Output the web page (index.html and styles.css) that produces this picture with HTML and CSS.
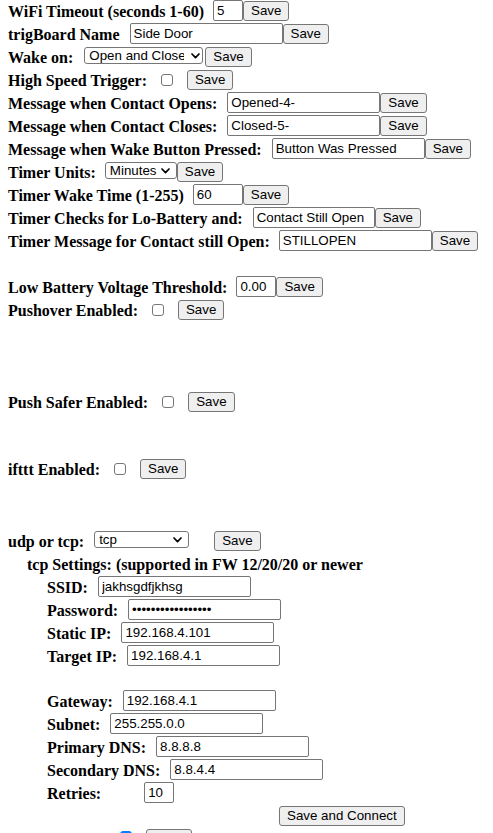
FILE: index.html
```html
<!DOCTYPE html>
<html lang="en">
<head>
<meta charset="utf-8">
<title>trigBoard Configurator</title>
<link rel="stylesheet" href="styles.css">
</head>
<body>
<div class="page">
  <div class="row"><span class="lbl">WiFi Timeout (seconds 1-60)</span><input class="field w-30 tight" type="text" value="5"><button class="btn">Save</button></div>
  <div class="row"><span class="lbl">trigBoard Name</span><input class="field" type="text" value="Side Door"><button class="btn">Save</button></div>
  <div class="row"><span class="lbl">Wake on:</span><span class="sel-wrap sel-tight"><select class="sel w-118"><option>Open and Close</option><option>Open</option><option>Close</option></select><svg class="chev" width="9" height="6" viewBox="0 0 9 6"><path d="M1 1 L4.5 4.6 L8 1" fill="none" stroke="#000" stroke-width="1.7" stroke-linecap="round" stroke-linejoin="round"/></svg></span><button class="btn btn-gap2">Save</button></div>
  <div class="row"><span class="lbl">High Speed Trigger:</span><input class="chk" type="checkbox"><button class="btn btn-after-chk">Save</button></div>
  <div class="row"><span class="lbl">Message when Contact Opens:</span><input class="field" type="text" value="Opened-4-"><button class="btn">Save</button></div>
  <div class="row"><span class="lbl">Message when Contact Closes:</span><input class="field" type="text" value="Closed-5-"><button class="btn">Save</button></div>
  <div class="row"><span class="lbl">Message when Wake Button Pressed:</span><input class="field" type="text" value="Button Was Pressed"><button class="btn">Save</button></div>
  <div class="row"><span class="lbl">Timer Units:</span><span class="sel-wrap sel-units"><select class="sel w-72"><option>Minutes</option><option>Seconds</option></select><svg class="chev" width="9" height="6" viewBox="0 0 9 6"><path d="M1 1 L4.5 4.6 L8 1" fill="none" stroke="#000" stroke-width="1.7" stroke-linecap="round" stroke-linejoin="round"/></svg></span><button class="btn">Save</button></div>
  <div class="row"><span class="lbl">Timer Wake Time (1-255)</span><input class="field w-50 tight" type="text" value="60"><button class="btn">Save</button></div>
  <div class="row"><span class="lbl">Timer Checks for Lo-Battery and:</span><input class="field w-122" type="text" value="Contact Still Open"><button class="btn">Save</button></div>
  <div class="row"><span class="lbl">Timer Message for Contact still Open:</span><input class="field tight" type="text" value="STILLOPEN"><button class="btn">Save</button></div>
  <div class="spacer s-23"></div>
  <div class="row"><span class="lbl">Low Battery Voltage Threshold:</span><input class="field w-40 tight" type="text" value="0.00"><button class="btn">Save</button></div>
  <div class="row"><span class="lbl">Pushover Enabled:</span><input class="chk" type="checkbox"><button class="btn btn-after-chk">Save</button></div>
  <div class="spacer s-69"></div>
  <div class="row"><span class="lbl">Push Safer Enabled:</span><input class="chk" type="checkbox"><button class="btn btn-after-chk">Save</button></div>
  <div class="spacer s-44"></div>
  <div class="row"><span class="lbl">ifttt Enabled:</span><input class="chk" type="checkbox"><button class="btn btn-after-chk">Save</button></div>
  <div class="spacer s-49"></div>
  <div class="row"><span class="lbl">udp or tcp:</span><span class="sel-wrap sel-udp"><select class="sel w-95"><option>tcp</option><option>udp</option></select><svg class="chev" width="9" height="6" viewBox="0 0 9 6"><path d="M1 1 L4.5 4.6 L8 1" fill="none" stroke="#000" stroke-width="1.7" stroke-linecap="round" stroke-linejoin="round"/></svg></span><button class="btn btn-gap25">Save</button></div>
  <div class="section">
    <div class="row"><span class="lbl">tcp Settings: (supported in FW 12/20/20 or newer</span></div>
    <div class="sub">
      <div class="row"><span class="lbl">SSID:</span><input class="field" type="text" value="jakhsgdfjkhsg"></div>
      <div class="row"><span class="lbl">Password:</span><input class="field" type="password" value="abcdefghijklmnopq"></div>
      <div class="row"><span class="lbl">Static IP:</span><input class="field" type="text" value="192.168.4.101"></div>
      <div class="row"><span class="lbl">Target IP:</span><input class="field" type="text" value="192.168.4.1"></div>
      <div class="spacer s-22"></div>
      <div class="row"><span class="lbl">Gateway:</span><input class="field" type="text" value="192.168.4.1"></div>
      <div class="row"><span class="lbl">Subnet:</span><input class="field" type="text" value="255.255.0.0"></div>
      <div class="row"><span class="lbl">Primary DNS:</span><input class="field" type="text" value="8.8.8.8"></div>
      <div class="row"><span class="lbl">Secondary DNS:</span><input class="field" type="text" value="8.8.4.4"></div>
      <div class="row"><span class="lbl">Retries:</span><input class="field w-30 retries" type="text" value="10"></div>
      <div class="row connect-row"><button class="btn">Save and Connect</button></div>
      <div class="row"><input class="chk chk-on" type="checkbox" checked><button class="btn btn-after-chk">Save</button></div>
    </div>
  </div>
</div>
</body>
</html>
```

FILE: styles.css
```css
html, body {
  margin: 0;
  padding: 0;
  background: #fff;
}

body {
  font-family: "Liberation Serif", "Times New Roman", serif;
  font-size: 16px;
  color: #000;
  overflow: hidden;
}

.page {
  padding: 0 8px;
}

.row {
  display: flex;
  align-items: flex-start;
  height: 23px;
  white-space: nowrap;
}

.lbl {
  font-weight: bold;
  line-height: 23px;
}

.spacer.s-22 { height: 22px; }
.spacer.s-23 { height: 23px; }
.spacer.s-44 { height: 44px; }
.spacer.s-49 { height: 49px; }
.spacer.s-69 { height: 69px; }

.field,
.sel,
.btn {
  font-family: "Liberation Sans", Arial, sans-serif;
  font-size: 13.333px;
  color: #000;
  box-sizing: border-box;
}

.field {
  width: 153px;
  height: 21px;
  margin: 0 0 0 10px;
  padding: 0 3px;
  border: 1px solid #767676;
  border-radius: 2px;
  background: #fff;
  outline: none;
}

.field.tight { margin-left: 9px; }
.field.w-30 { width: 30px; }
.field.w-40 { width: 40px; }
.field.w-50 { width: 50px; }
.field.w-122 { width: 122px; }
.field.retries { margin-left: 43px; }

.btn {
  height: 20px;
  margin: 1px 0 0 0;
  padding: 0 7px;
  border: 1px solid #767676;
  border-radius: 3px;
  background: #efefef;
  line-height: 18px;
}

.btn-gap2 { margin-left: 2px; }
.btn-gap25 { margin-left: 25px; }
.btn-after-chk { margin-left: 14px; }

.sel-wrap {
  position: relative;
  display: inline-flex;
  margin: 1px 0 0 11px;
}

.sel {
  -webkit-appearance: none;
  appearance: none;
  height: 17px;
  margin: 0;
  padding: 0 18px 0 4px;
  border: 1px solid #767676;
  border-radius: 3px;
  background: #fff;
  line-height: 15px;
  outline: none;
}

.sel.w-72 { width: 72px; }
.sel.w-95 { width: 95px; }
.sel.w-118 { width: 119px; }

.chev {
  position: absolute;
  right: 7px;
  top: 6px;
  pointer-events: none;
}

.sel-tight .chev { right: 3px; }
.sel-units { margin-left: 9px; }
.sel-udp { margin-left: 10px; }

.chk {
  -webkit-appearance: none;
  appearance: none;
  width: 12px;
  height: 12px;
  margin: 5px 0 0 14px;
  border: 1px solid #767676;
  border-radius: 3px;
  background: #fff;
  box-sizing: border-box;
}

.chk.chk-on {
  margin: 3px 0 0 73px;
  background: #0a7cff;
  border-color: #0a7cff;
}

.section {
  padding-left: 19px;
}

.sub {
  padding-left: 20px;
}

.connect-row {
  padding-left: 232px;
}
```
